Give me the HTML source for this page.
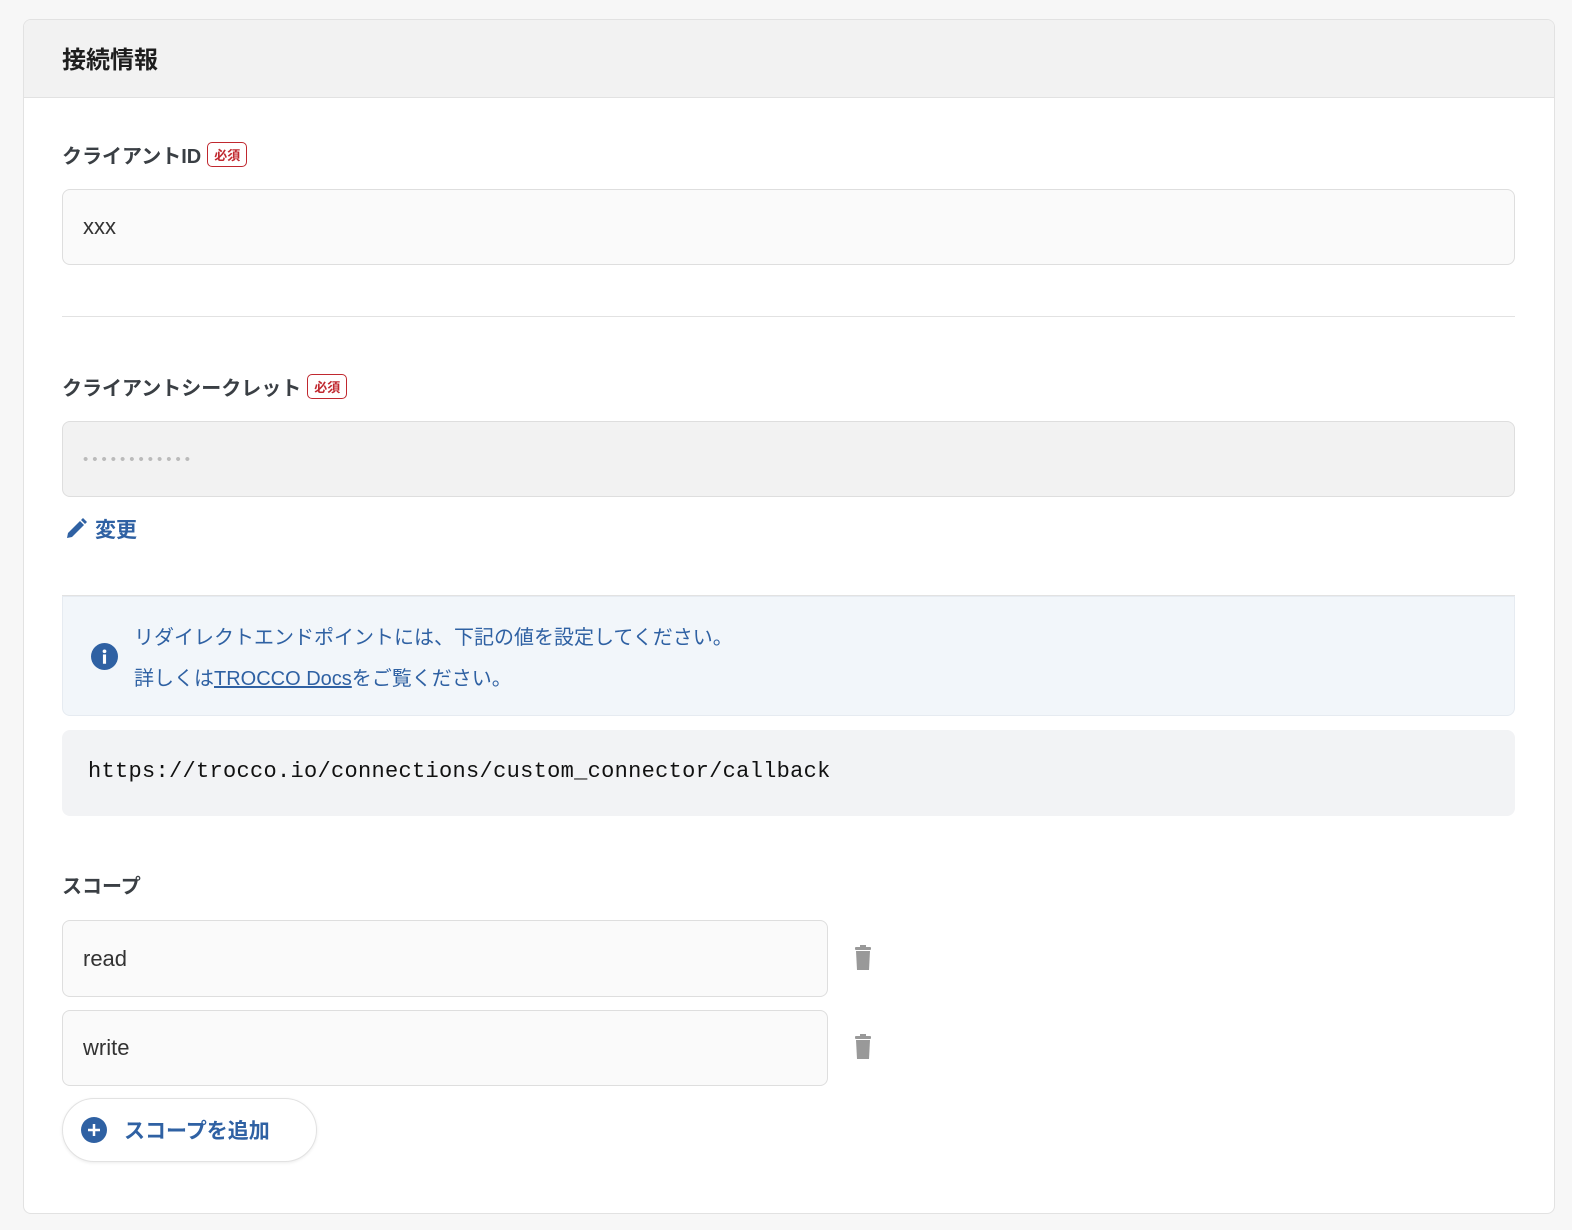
<!DOCTYPE html>
<html><head><meta charset="utf-8"><style>
*{box-sizing:border-box;margin:0;padding:0}
body{width:1572px;height:1230px;background:#f7f7f7;font-family:"Liberation Sans","Noto Sans CJK JP",sans-serif;position:relative;overflow:hidden;color:#333}
.card{position:absolute;left:23px;top:19px;width:1532px;height:1195px;background:#fff;border:1px solid #e2e2e2;border-radius:8px;overflow:hidden}
.hd{position:absolute;left:0;top:0;width:100%;height:78px;background:#f2f2f2;border-bottom:1px solid #e2e2e2}
.hd span{position:absolute;left:38px;top:20px;font-size:24px;font-weight:bold;color:#1e1e1e}
.a{position:absolute}
.lbl{font-size:20px;font-weight:bold;color:#3a3f44}
.req{display:inline-block;font-size:13px;color:#c0282f;border:1px solid #c0282f;border-radius:5px;padding:2px 6px;margin-left:6px;vertical-align:3px;font-weight:bold}
.inp{background:#fafafa;border:1px solid #dedede;border-radius:8px;font-size:22px;color:#333;padding-left:20px;display:flex;align-items:center}
.hr{height:1px;background:#e2e2e2}
</style></head><body>
<div class="card">
<div class="hd"><span>接続情報</span></div>
</div>
<div class="a lbl" style="left:62px;top:140px">クライアントID<span class="req">必須</span></div>
<div class="a inp" style="left:62px;top:189px;width:1453px;height:76px">xxx</div>
<div class="a hr" style="left:62px;top:316px;width:1453px"></div>
<div class="a lbl" style="left:62px;top:372px">クライアントシークレット<span class="req">必須</span></div>
<div class="a inp" style="left:62px;top:421px;width:1453px;height:76px;background:#f2f2f2;color:#bbb;font-size:15px;letter-spacing:4px">••••••••••••</div>
<div class="a" style="left:64px;top:514px;color:#2f61a3;font-weight:bold;font-size:21px;display:flex;align-items:center;gap:7px">
<svg width="24" height="24" viewBox="0 0 24 24"><path d="M3 21l1-5 12-12 4 4-12 12z M17 3l2-2 4 4-2 2z" fill="#2f61a3"/></svg>変更</div>
<div class="a hr" style="left:62px;top:595px;width:1453px"></div>
<div class="a" style="left:62px;top:596px;width:1453px;height:120px;background:#f2f6fa;border:1px solid #e6ebf1;border-radius:0 0 8px 8px"></div>
<svg class="a" style="left:91px;top:643px" width="27" height="27" viewBox="0 0 26 26"><circle cx="13" cy="13" r="13" fill="#2f61a3"/><circle cx="13" cy="8" r="1.8" fill="#fff"/><rect x="11.5" y="11" width="3" height="9" fill="#fff"/></svg>
<div class="a" style="left:134px;top:618px;font-size:20px;color:#2f61a3;line-height:41px">リダイレクトエンドポイントには、下記の値を設定してください。<br>詳しくは<u>TROCCO Docs</u>をご覧ください。</div>
<div class="a" style="left:62px;top:730px;width:1453px;height:86px;background:#f2f3f5;border-radius:8px;font-family:'Liberation Mono',monospace;font-size:22px;letter-spacing:0.3px;color:#111;padding:29px 0 0 26px">https://trocco.io/connections/custom_connector/callback</div>
<div class="a lbl" style="left:62px;top:870px">スコープ</div>
<div class="a inp" style="left:62px;top:920px;width:766px;height:77px">read</div>
<div class="a inp" style="left:62px;top:1010px;width:766px;height:76px">write</div>
<svg class="a" style="left:852px;top:945px" width="22" height="26" viewBox="0 0 22 26"><rect x="3" y="2" width="16" height="3" rx="1" fill="#999"/><rect x="8" y="0" width="6" height="3" fill="#999"/><path d="M4 6h14l-1 19H5z" fill="#999"/></svg>
<svg class="a" style="left:852px;top:1034px" width="22" height="26" viewBox="0 0 22 26"><rect x="3" y="2" width="16" height="3" rx="1" fill="#999"/><rect x="8" y="0" width="6" height="3" fill="#999"/><path d="M4 6h14l-1 19H5z" fill="#999"/></svg>
<div class="a" style="left:62px;top:1098px;width:255px;height:64px;border:1px solid #e2e2e2;border-radius:32px;background:#fff;box-shadow:0 1px 3px rgba(0,0,0,.08);display:flex;align-items:center;padding-left:18px;gap:17px;color:#2f61a3;font-weight:bold;font-size:21px">
<svg width="26" height="26" viewBox="0 0 26 26"><circle cx="13" cy="13" r="13" fill="#2f61a3"/><path d="M13 7v12M7 13h12" stroke="#fff" stroke-width="2.5"/></svg>スコープを追加</div>
</body></html>
